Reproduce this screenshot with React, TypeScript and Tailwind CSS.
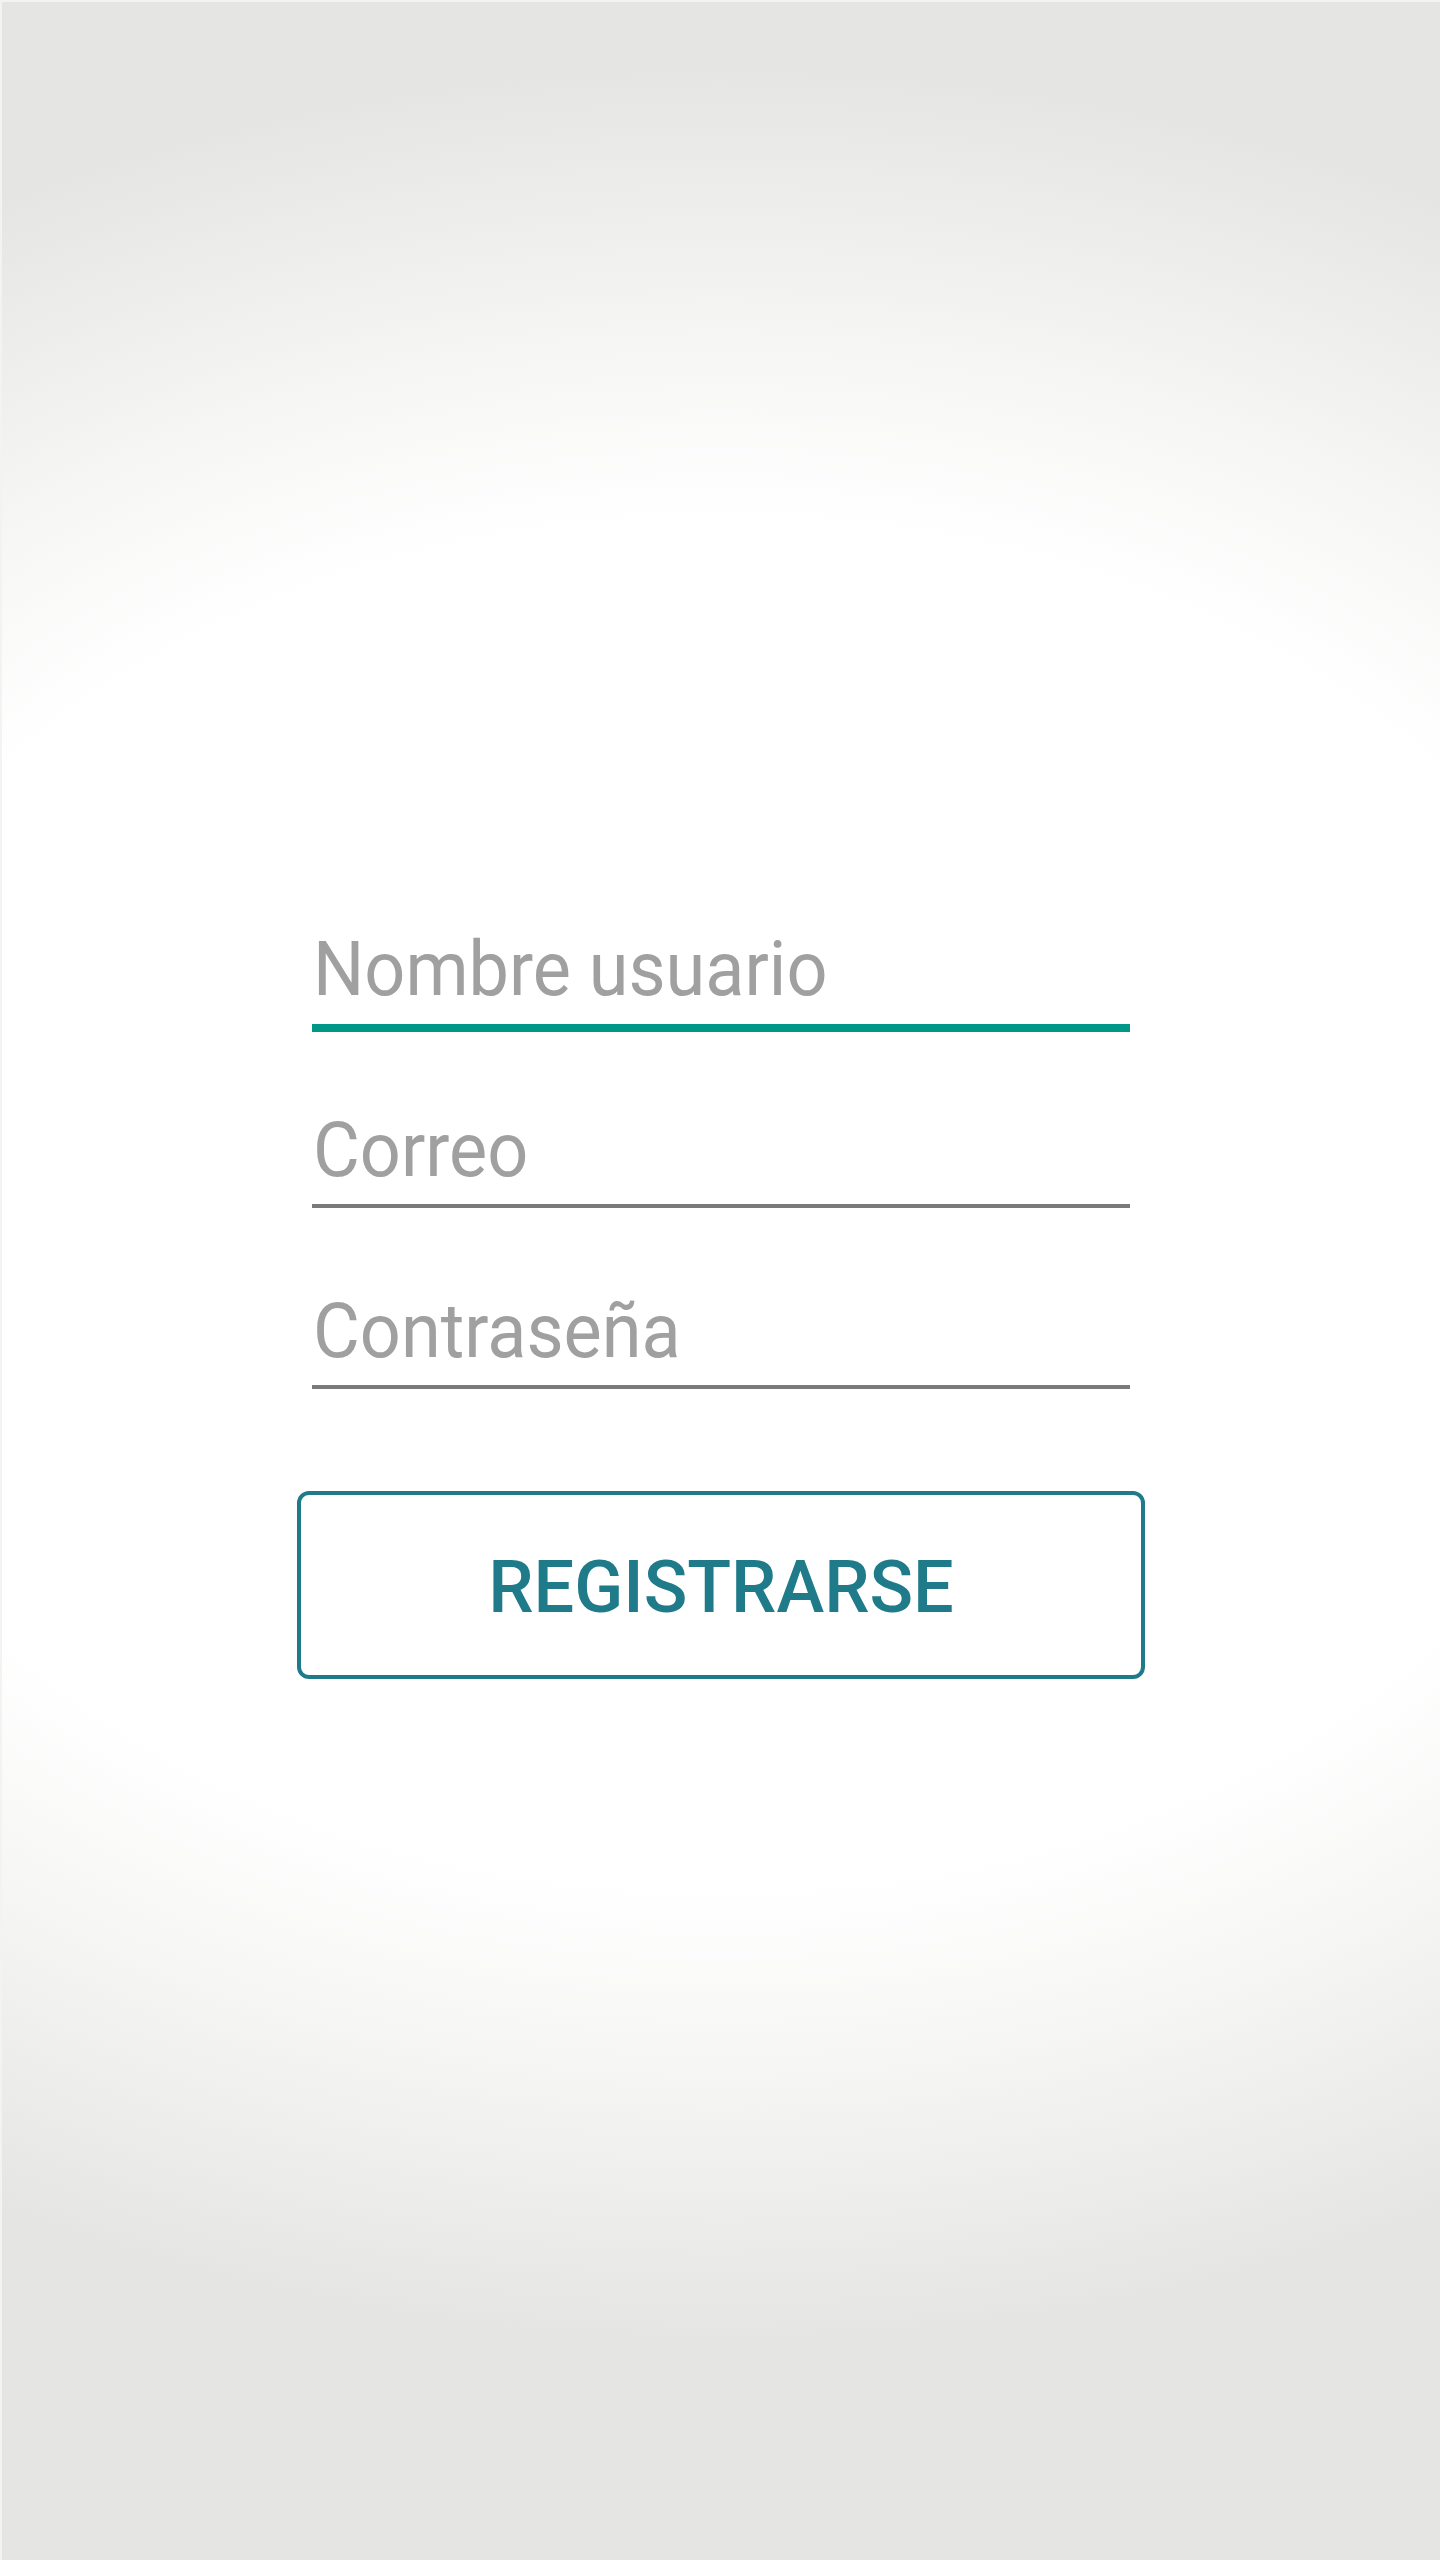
import React from 'react';

const fields = [
  { label: 'Nombre usuario', focused: true },
  { label: 'Correo', focused: false },
  { label: 'Contraseña', focused: false },
];

export default function App() {
  return (
    <div
      className="min-h-screen w-full border-l-2 border-t-2 border-[#f3f3f2] bg-[radial-gradient(ellipse_1540px_1140px_at_50%_47%,#ffffff_60%,#f7f7f6_74%,#e5e5e4_100%)] font-['Roboto',sans-serif]"
    >
      <div className="mx-auto w-[818px] pt-[934px]">
        {fields.map((f) => (
          <div key={f.label} className="flex h-[181px] flex-col">
            <span className="inline-block origin-bottom scale-y-[1.05] pl-[1px] text-[72px] leading-none text-[#a0a0a0]">
              {f.label}
            </span>
            {f.focused ? (
              <div className="mt-4 h-2 w-full bg-[#009688]" />
            ) : (
              <div className="mt-[15px] h-1 w-full bg-[#7a7a7a]" />
            )}
          </div>
        ))}

        {/* Register button */}
        <button
          type="button"
          className="-mx-[15px] mt-3 flex h-[188px] w-[848px] items-center justify-center rounded-xl border-4 border-[#1f7b8a] bg-white pt-[6px] text-[72px] font-medium leading-none text-[#1f7b8a]"
        >
          REGISTRARSE
        </button>
      </div>
    </div>
  );
}
